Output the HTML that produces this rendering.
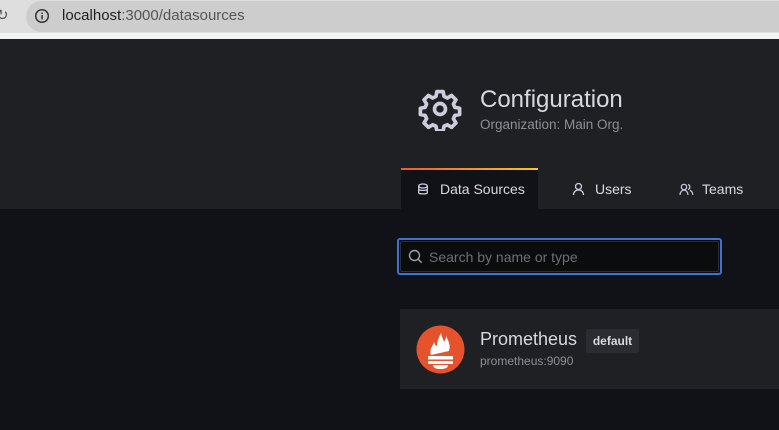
<!DOCTYPE html>
<html><head><style>
*{margin:0;padding:0;box-sizing:border-box}
body{width:779px;height:430px;overflow:hidden;background:#111217;font-family:"Liberation Sans",sans-serif;position:relative}
.bar{position:absolute;left:0;top:0;width:779px;height:33px;background:#dedede}
.strip{position:absolute;left:0;top:33px;width:779px;height:6px;background:#f2f2f2}
.pill{position:absolute;left:26px;top:1px;width:800px;height:31px;border-radius:16px;background:#cdcdcd}
.url{position:absolute;left:62px;top:7px;font-size:15px;color:#555}
.url b{font-weight:normal;color:#1f1f1f}
.hdr{position:absolute;left:0;top:39px;width:779px;height:170px;background:#1f2024}
.abs{position:absolute}
</style></head><body>
<div class="bar"><div class="pill"></div>
<svg class="abs" style="left:34px;top:8px" width="16" height="16" viewBox="0 0 16 16"><circle cx="8" cy="8" r="6.3" fill="none" stroke="#333" stroke-width="1.5"/><rect x="7.3" y="7" width="1.5" height="4.5" fill="#333"/><rect x="7.3" y="4.5" width="1.5" height="1.5" fill="#333"/></svg>
<div class="url"><b>localhost</b>:3000/datasources</div>
<div class="abs" style="left:-4px;top:6px;font-size:15px;color:#555">↻</div>
</div>
<div class="strip"></div>
<div class="hdr"></div>
<svg class="abs" style="left:418px;top:87px" width="44" height="44" viewBox="0 0 24 24"><path fill="none" stroke="#ccccdc" stroke-width="2" stroke-linejoin="round" d="M10.3 2.5h3.4l.5 2.6 1.8.9 2.3-1.4 2.4 2.4-1.4 2.3.8 1.8 2.6.5v3.4l-2.6.5-.8 1.8 1.4 2.3-2.4 2.4-2.3-1.4-1.8.8-.5 2.6h-3.4l-.5-2.6-1.8-.8-2.3 1.4-2.4-2.4 1.4-2.3-.8-1.8-2.6-.5v-3.4l2.6-.5.8-1.8-1.4-2.3 2.4-2.4 2.3 1.4 1.8-.9z"/><circle cx="12" cy="12" r="3" fill="none" stroke="#ccccdc" stroke-width="2"/></svg>
<div class="abs" style="left:480px;top:86px;font-size:24px;color:#d8d9e0">Configuration</div>
<div class="abs" style="left:480px;top:117px;font-size:13.5px;color:#8e8e95">Organization: Main Org.</div>
<div class="abs" style="left:401px;top:169px;width:137px;height:40px;background:#111217"></div>
<div class="abs" style="left:401px;top:168px;width:137px;height:2px;background:linear-gradient(90deg,#f05a28,#fbca0a)"></div>
<svg class="abs" style="left:417px;top:183px" width="12" height="13" viewBox="0 0 12 13"><ellipse cx="6" cy="3" rx="4.3" ry="2" fill="none" stroke="#ccccdc" stroke-width="1.3"/><path d="M1.7 3v7c0 1.2 8.6 1.2 8.6 0V3M1.7 6.5c0 1.2 8.6 1.2 8.6 0" fill="none" stroke="#ccccdc" stroke-width="1.3"/></svg>
<div class="abs" style="left:440px;top:181px;font-size:14px;color:#d8d9e0">Data Sources</div>
<svg class="abs" style="left:572px;top:182px" width="13" height="14" viewBox="0 0 13 14"><circle cx="6.5" cy="4.5" r="3" fill="none" stroke="#ccccdc" stroke-width="1.3"/><path d="M1.5 13c0-3 2.2-5 5-5s5 2 5 5" fill="none" stroke="#ccccdc" stroke-width="1.3"/></svg>
<div class="abs" style="left:595px;top:181px;font-size:14px;color:#d8d9e0">Users</div>
<svg class="abs" style="left:679px;top:182px" width="15" height="14" viewBox="0 0 15 14"><circle cx="5" cy="5" r="2.7" fill="none" stroke="#ccccdc" stroke-width="1.2"/><path d="M1 13c0-3 1.8-4.8 4-4.8s4 1.8 4 4.8M9 2.5a2.6 2.6 0 0 1 0 5M11 8.5c1.7.6 2.8 2.2 2.8 4.5" fill="none" stroke="#ccccdc" stroke-width="1.2"/></svg>
<div class="abs" style="left:702px;top:181px;font-size:14px;color:#d8d9e0">Teams</div>
<div class="abs" style="left:397px;top:238px;width:325px;height:37px;border:2px solid #3d71d9;border-radius:3px;background:#0b0c0e"><div style="position:absolute;inset:1px;border:1px solid #2c2e33;border-radius:2px"></div></div>
<svg class="abs" style="left:408px;top:249px" width="15" height="15" viewBox="0 0 15 15"><circle cx="6.5" cy="6.5" r="5" fill="none" stroke="#9fa0a6" stroke-width="1.4"/><path d="M10.2 10.2l3.5 3.5" stroke="#9fa0a6" stroke-width="1.4"/></svg>
<div class="abs" style="left:429px;top:249px;font-size:14px;color:#6e6f76">Search by name or type</div>
<div class="abs" style="left:400px;top:309px;width:379px;height:80px;background:#1f2024"></div>
<svg class="abs" style="left:416px;top:325px" width="49" height="49" viewBox="0 0 49 49"><circle cx="24.5" cy="24.5" r="24" fill="#e6522c"/><path d="M15 30c-2-6 2-9 3-13 1 3 2 4 3 4 0-5 2-9 4-13 1 4 2 6 3 9 1-2 2-3 2-6 2 4 5 9 3 15z" fill="#fff"/><rect x="12" y="31" width="25" height="3.5" fill="#fff"/><rect x="12" y="36" width="25" height="3" fill="#fff"/><path d="M17 40h15c0 3-3 4-7.5 4S17 43 17 40z" fill="#fff"/></svg>
<div class="abs" style="left:480px;top:329px;font-size:18px;color:#d8d9e0">Prometheus</div>
<div class="abs" style="left:586px;top:329px;width:53px;height:24px;background:#2a2c31;border-radius:2px;font-size:12px;font-weight:bold;color:#d8d9e0;text-align:center;line-height:24px">default</div>
<div class="abs" style="left:480px;top:354px;font-size:12px;color:#8e8e95">prometheus:9090</div>
</body></html>
